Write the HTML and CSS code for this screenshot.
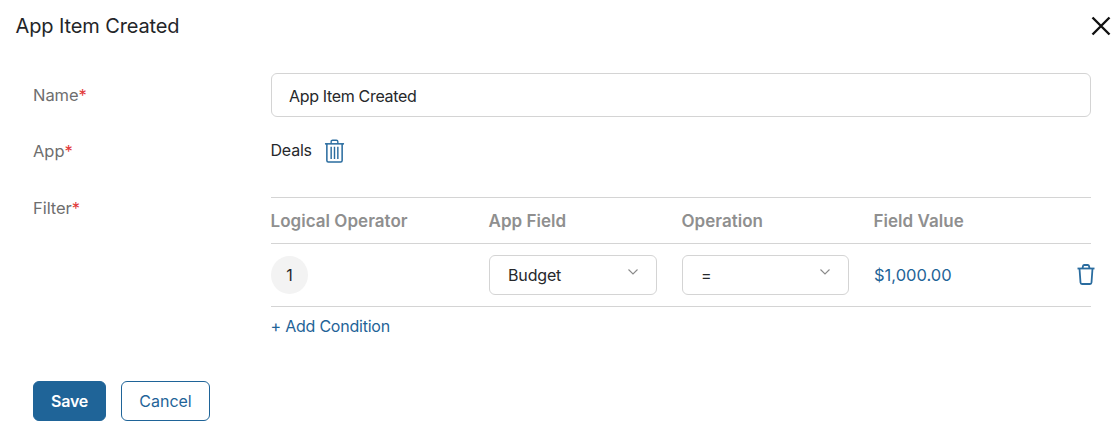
FILE: index.html
```html
<!DOCTYPE html>
<html lang="en">
<head>
<meta charset="utf-8">
<title>App Item Created</title>
<link rel="stylesheet" href="styles.css">
</head>
<body>
<div class="dialog">
  <header class="head">
    <h1 class="title">App Item Created</h1>
    <button class="close" aria-label="Close">
      <svg width="20" height="20" viewBox="0 0 20 20"><path d="M1.500 1.500 18.500 18.500M18.500 1.500 1.500 18.500" fill="none" stroke="#111" stroke-width="2.400"/></svg>
    </button>
  </header>
  <form class="form">
    <div class="label name-label">Name<span class="req">*</span></div>
    <div class="input">App Item Created</div>

    <div class="label app-label">App<span class="req">*</span></div>
    <div class="app-value">
      <span class="deals">Deals</span>
      <svg class="bin" width="21" height="24" viewBox="0 0 22 25" fill="none" stroke="#2a6c9f">
        <path d="M1 5H21" stroke-width="1.600"/>
        <path d="M3 5V22.500Q3 24 4.500 24H17.500Q19 24 19 22.500V5" stroke-width="1.600"/>
        <path d="M7.500 5V2.500Q7.500 1.200 9 1.200H13Q14.500 1.200 14.500 2.500V5" stroke-width="1.400"/>
        <path d="M7.500 8V21M11 8V21M14.500 8V21" stroke-width="1.500"/>
      </svg>
    </div>

    <div class="label filter-label">Filter<span class="req">*</span></div>
    <div class="filter">
      <div class="row row-head">
        <div>Logical Operator</div>
        <div>App Field</div>
        <div>Operation</div>
        <div>Field Value</div>
      </div>
      <div class="row row-body">
        <div><span class="num">1</span></div>
        <div class="select">Budget<svg class="chev" width="10" height="6" viewBox="0 0 10 6"><path d="M.5.5 5 5 9.500.5" fill="none" stroke="#8a8a8a" stroke-width="1.100"/></svg></div>
        <div class="select">=<svg class="chev" width="10" height="6" viewBox="0 0 10 6"><path d="M.5.5 5 5 9.500.5" fill="none" stroke="#8a8a8a" stroke-width="1.100"/></svg></div>
        <div class="value">$1,000.00</div>
        <svg class="bin2" width="18" height="21" viewBox="0 0 18 21" fill="none" stroke="#2a6c9f" stroke-width="1.800">
          <path d="M.5 4.500H17.500"/>
          <path d="M2.500 4.500 3.500 18.500Q3.600 20 5 20H13Q14.400 20 14.500 18.500L15.500 4.500"/>
          <path d="M5.500 4.500 6 2Q6.200 1 7.200 1H10.800Q11.800 1 12 2L12.500 4.500"/>
        </svg>
      </div>
      <a class="add">+ Add Condition</a>
    </div>
  </form>
  <div class="actions">
    <button class="btn primary" type="button">Save</button>
    <button class="btn ghost" type="button">Cancel</button>
  </div>
</div>
</body>
</html>
```

FILE: styles.css
```css
* { box-sizing: border-box; }
html, body { margin: 0; padding: 0; background: #fff; }
body {
  width: 1115px;
  height: 427px;
  overflow: hidden;
  font-family: Inter, "Liberation Sans", sans-serif;
  font-size: 16px;
  color: #26282b;
}
.dialog { display: flex; flex-direction: column; }
.head {
  height: 52px;
  padding: 0 4px 0 16px;
  display: flex;
  align-items: center;
  justify-content: space-between;
}
.title { margin: -1px 0 0 -0.5px; font-size: 20px; font-weight: 400; line-height: 26px; letter-spacing: -0.12px; color: #232528; }
.close {
  width: 20px; height: 20px; padding: 0; border: 0; background: none;
  display: flex;
}
.form {
  margin-top: 21px;
  padding-left: 33px;
  display: grid;
  grid-template-columns: 238px 820px;
  grid-template-rows: 44px 80px auto;
  width: 1091px;
}
.label { font-size: 16.5px; line-height: 20px; color: #6e6e6e; letter-spacing: -0.05px; }
.req { color: #e23a3a; }
.name-label { padding-top: 12px; }
.app-label { padding-top: 24px; }
.filter-label { padding-top: 1px; }
.input {
  height: 44px;
  border: 1px solid #d4d4d4;
  border-radius: 6px;
  padding: 1px 17px 0;
  display: flex;
  align-items: center;
  line-height: 20px;
  letter-spacing: -0.33px;
}
.app-value {
  display: flex;
  align-items: flex-start;
  gap: 12px;
  padding-top: 23px;
  line-height: 20px;
}
.deals { letter-spacing: -0.2px; margin-left: -0.5px; }
.bin { flex: none; margin-top: -1px; }
.filter { display: flex; flex-direction: column; border-top: 1px solid #d4d4d4; }
.row {
  display: grid;
  grid-template-columns: 218px 193px 192px 1fr auto;
  align-items: center;
  border-bottom: 1px solid #d4d4d4;
}
.row-head { height: 46px; font-size: 17px; font-weight: 600; color: #8f8f8f; letter-spacing: 0.03px; }
.row-head div { margin-left: -0.5px; }
.row-body { height: 63px; }
.num {
  width: 37px; height: 38px; border-radius: 50%;
  background: #f3f3f3;
  display: flex; align-items: center; justify-content: center;
}
.select {
  width: 168px;
  height: 40px;
  border: 1px solid #d4d4d4;
  border-radius: 6px;
  padding: 0 18px;
  display: flex;
  align-items: center;
  justify-content: space-between;
  margin-bottom: 1px;
  letter-spacing: -0.15px;
}
.select + .select { width: 167px; }
.chev { margin: -6px 0 0; }
.value { color: #1f6498; font-size: 16.5px; }
.bin2 { margin-right: -4px; margin-top: -1px; }
.add { color: #1f6498; line-height: 20px; margin-top: 9px; letter-spacing: -0.22px; margin-left: -0.5px; }
.actions { margin-top: 45px; padding-left: 33px; display: flex; gap: 15px; }
.btn {
  height: 40px;
  border-radius: 6px;
  font-family: inherit;
  font-size: 16px;
  padding: 0;
}
.primary { width: 73px; background: #1f6498; border: 1px solid #1f6498; color: #fff; font-weight: 600; letter-spacing: -0.2px; }
.ghost { width: 89px; background: #fff; border: 1px solid #1f6498; color: #1f6498; }
```
